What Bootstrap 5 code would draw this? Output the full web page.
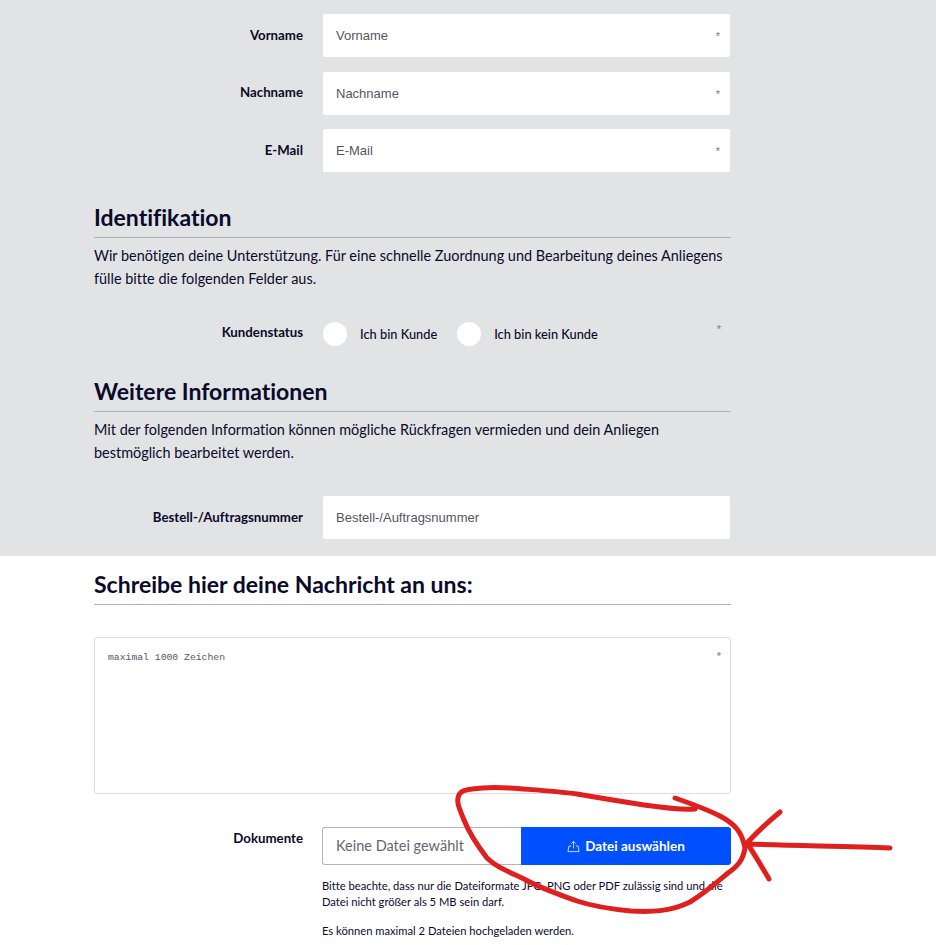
<!DOCTYPE html>
<html lang="de">

<head>
    <meta charset="UTF-8">
    <title>Kontaktformular</title>
    <link href="https://cdn.jsdelivr.net/npm/bootstrap@5.3.0/dist/css/bootstrap.min.css" rel="stylesheet">
    <style>
        body {
            font-family: "Lato", "Liberation Sans", sans-serif;
            color: #0a0a2a;
            position: relative;
            font-size: 14.45px;
            font-variant-ligatures: none;
        }

        .grey-band {
            background: #e2e3e5;
            height: 556px;
            padding-top: 14px;
        }

        .form-wrap {
            width: 637px;
            margin-left: 94px;
        }

        .msg-wrap {
            padding-top: 15px;
        }

        .field-row {
            display: flex;
            align-items: center;
            margin-bottom: 14.5px;
        }

        .field-label {
            width: 209px;
            flex: none;
            text-align: right;
            font-size: 13.25px;
            font-weight: 700;
            margin: 0;
        }

        .field-box {
            position: relative;
            width: 407px;
            margin-left: 20px;
        }

        .field-box .form-control {
            height: 43px;
            border: 0;
            border-radius: 2px;
            padding-left: 13px;
            font-family: "Liberation Sans", sans-serif;
            font-size: 13px;
        }

        .field-box .form-control::placeholder,
        .msg-box::placeholder {
            color: #55555f;
        }

        .req-mark {
            position: absolute;
            right: 10px;
            top: 17px;
            font-family: "Liberation Sans", sans-serif;
            font-size: 11px;
            color: #77777f;
            line-height: 1;
        }

        .req-status {
            top: 10px;
        }

        .req-msg {
            top: 22px;
        }

        .sec-title {
            font-size: 23px;
            font-weight: 700;
            line-height: 26px;
            margin: 0;
            padding-bottom: 7px;
            border-bottom: 1px solid #aeafb8;
        }

        .sec-gap {
            margin-top: 32px;
        }

        .sec-text {
            line-height: 23px;
            margin: 6px 0 0;
        }

        .status-row {
            display: flex;
            align-items: center;
            position: relative;
        }

        .status-row .field-label {
            margin-top: -2px;
        }

        .round-check {
            width: 24px;
            height: 24px;
            border-radius: 50%;
            background: #fff;
            flex: none;
        }

        .round-check-first {
            margin-left: 20px;
        }

        .round-label {
            font-size: 12.8px;
            font-weight: 500;
            margin: 1px 20px 0 13px;
        }

        .msg-box {
            display: block;
            width: 100%;
            height: 157px;
            border: 1px solid #dcdcdf;
            border-radius: 3px;
            padding: 13px;
            font-family: "Liberation Mono", monospace;
            font-size: 9.75px;
            resize: none;
        }

        .doc-row {
            margin-top: 33px;
        }

        .doc-row .field-label {
            margin-top: 2px;
        }

        .file-pick {
            display: flex;
            width: 409px;
            height: 38px;
            margin-left: 19px;
        }

        .file-name {
            width: 199px;
            border: 1px solid #b5b5b9;
            border-right: 0;
            border-radius: 3px 0 0 3px;
            padding: 8px 13px;
            font-size: 14.5px;
            color: #66666e;
            line-height: 20px;
        }

        .file-btn {
            width: 210px;
            background: #0050ff;
            border: 0;
            border-radius: 0 3px 3px 0;
            color: #fff;
            font-size: 13.5px;
            font-weight: 700;
            gap: 5px;
        }

        .help-note {
            font-size: 11.2px;
            line-height: 16px;
            margin: 13px 0 0 228px;
        }

        .red-notes {
            position: absolute;
            left: 0;
            top: 0;
            pointer-events: none;
        }
    </style>
</head>

<body>
    <div class="grey-band">
        <div class="form-wrap">
            <div class="field-row">
                <label class="field-label">Vorname</label>
                <div class="field-box">
                    <input type="text" class="form-control" placeholder="Vorname">
                    <span class="req-mark">*</span>
                </div>
            </div>
            <div class="field-row">
                <label class="field-label">Nachname</label>
                <div class="field-box">
                    <input type="text" class="form-control" placeholder="Nachname">
                    <span class="req-mark">*</span>
                </div>
            </div>
            <div class="field-row">
                <label class="field-label">E-Mail</label>
                <div class="field-box">
                    <input type="text" class="form-control" placeholder="E-Mail">
                    <span class="req-mark">*</span>
                </div>
            </div>

            <h2 class="sec-title mt-4 pt-2">Identifikation</h2>
            <p class="sec-text">Wir benötigen deine Unterstützung. Für eine schnelle Zuordnung und Bearbeitung deines Anliegens fülle bitte die folgenden Felder aus.</p>

            <div class="status-row mt-4 pt-2">
                <label class="field-label">Kundenstatus</label>
                <span class="round-check round-check-first"></span>
                <span class="round-label">Ich bin Kunde</span>
                <span class="round-check"></span>
                <span class="round-label">Ich bin kein Kunde</span>
                <span class="req-mark req-status">*</span>
            </div>

            <h2 class="sec-title sec-gap">Weitere Informationen</h2>
            <p class="sec-text">Mit der folgenden Information können mögliche Rückfragen vermieden und dein Anliegen bestmöglich bearbeitet werden.</p>

            <div class="field-row mt-4 pt-2">
                <label class="field-label">Bestell-/Auftragsnummer</label>
                <div class="field-box">
                    <input type="text" class="form-control" placeholder="Bestell-/Auftragsnummer">
                </div>
            </div>
        </div>
    </div>

    <div class="form-wrap msg-wrap">
        <h2 class="sec-title">Schreibe hier deine Nachricht an uns:</h2>
        <div class="position-relative mt-4 pt-2">
            <textarea class="msg-box" placeholder="maximal 1000 Zeichen"></textarea>
            <span class="req-mark req-msg">*</span>
        </div>
        <div class="d-flex align-items-start doc-row">
            <label class="field-label">Dokumente</label>
            <div class="file-pick">
                <div class="file-name">Keine Datei gewählt</div>
                <button type="button" class="file-btn d-flex align-items-center justify-content-center">
                    <svg width="13" height="13" viewBox="0 0 14 14" fill="none" stroke="#cfe0ff" stroke-width="1">
                        <path d="M7 9V1.500M4.500 4 7 1.500 9.500 4M4.500 6.500H2L1 12.500h12L12 6.500H9.500" />
                    </svg>
                    Datei auswählen
                </button>
            </div>
        </div>
        <p class="help-note">Bitte beachte, dass nur die Dateiformate JPG, PNG oder PDF zulässig sind und die Datei nicht größer als 5 MB sein darf.</p>
        <p class="help-note">Es können maximal 2 Dateien hochgeladen werden.</p>
    </div>

    <!-- red marker scribble on top of the screenshot -->
    <svg class="red-notes" width="936" height="945" fill="none" stroke="#e0201f" stroke-width="5" stroke-linecap="round" stroke-linejoin="round">
        <path d="M675 798C695 805 708 810 720 816C735 824 742 832 745 848C743 860 738 866 728 873C715 884 705 893 690 902C670 912 650 912 631 911C610 909 595 907 577 901C555 893 540 888 524 879C505 870 495 866 487 858C477 845 470 835 464 820C459 808 457 803 458 798C459 792 463 790 472 789C485 787 495 787 510 788C535 790 555 791 577 794C600 798 625 802 644 805C665 808 680 810 695 809" />
        <path d="M890 848C850 846 800 846 747 844M780 812C768 822 757 832 747 843C755 855 762 867 769 879" />
    </svg>

    <script src="https://cdn.jsdelivr.net/npm/bootstrap@5.3.0/dist/js/bootstrap.bundle.min.js"></script>
</body>

</html>
